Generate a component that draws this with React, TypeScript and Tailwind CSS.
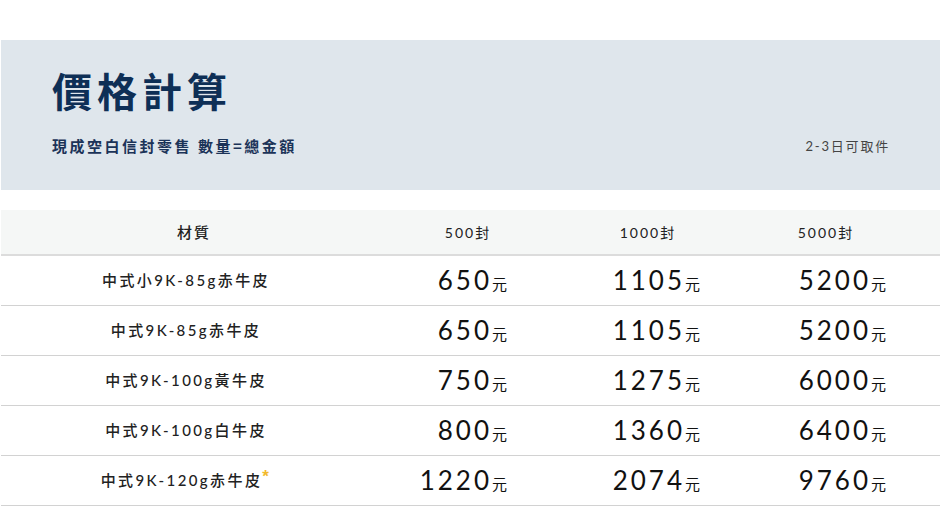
import React from "react";

const rows: { name: string; star?: boolean; v: [string, string, string] }[] = [
  { name: "中式小9K-85g赤牛皮", v: ["650", "1105", "5200"] },
  { name: "中式9K-85g赤牛皮", v: ["650", "1105", "5200"] },
  { name: "中式9K-100g黃牛皮", v: ["750", "1275", "6000"] },
  { name: "中式9K-100g白牛皮", v: ["800", "1360", "6400"] },
  { name: "中式9K-120g赤牛皮", star: true, v: ["1220", "2074", "9760"] },
];

const font = "font-['Lato','Noto_Sans_CJK_TC',sans-serif]";

function Price({ n }: { n: string }) {
  return (
    <span className="flex items-baseline">
      <span className="text-[26px] tracking-[3px] text-[#111]">{n}</span>
      <span className="text-[15px] text-[#111] font-['Noto_Sans_CJK_TC',sans-serif]">元</span>
    </span>
  );
}

export default function App() {
  return (
    <div className={`w-[941px] h-[512px] bg-white ${font}`}>
      <div className="h-[40px]" />
      <div className="mx-[1px] h-[150px] bg-[#dfe6ec] pl-[51px] pr-[50px] flex flex-col">
        <h1 className="mt-[25px] text-[40px] leading-[50px] font-bold tracking-[5px] text-[#0e2f56] font-['Noto_Sans_CJK_TC',sans-serif]">
          價格計算
        </h1>
        <div className="mt-[21px] flex items-center justify-between">
          <span className="text-[15px] leading-[20px] font-bold tracking-[2.5px] text-[#1b3358] font-['Noto_Sans_CJK_TC',sans-serif]">
            現成空白信封零售 數量=總金額
          </span>
          <span className="text-[13px] leading-[20px] tracking-[1.8px] text-[#444] font-['Noto_Sans_CJK_TC',sans-serif]">
            <span className="font-['Lato',sans-serif]">2-3</span>日可取件
          </span>
        </div>
      </div>
      <div className="h-[20px]" />
      <div className="mx-[1px]">
        <div className="grid grid-cols-[370px_194px_166px_1fr] h-[46px] bg-[#f5f7f6] border-b-2 border-[#dcdcdc] items-center text-[#222]">
          <div className="text-center text-[15px] tracking-[2px] pl-[16px] font-medium">材質</div>
          <div className="text-center text-[14px] tracking-[2px]">500封</div>
          <div className="text-center text-[14px] tracking-[2px]">1000封</div>
          <div className="text-center text-[14px] tracking-[2px] pr-[19px]">5000封</div>
        </div>
        {rows.map((r, i) => (
          <div
            key={i}
            className="grid grid-cols-[370px_194px_166px_1fr] h-[50px] border-b border-[#d2d2d2] items-center"
          >
            <div className="text-center text-[15px] tracking-[2.4px] text-[#222] font-medium">
              {r.name}
              {r.star && (
                <span className="text-[#f2b92e] text-[17px] font-bold leading-none relative -top-[4px] font-['Liberation_Sans',sans-serif]">*</span>
              )}
            </div>
            <div className="flex justify-end pr-[58px]">
              <Price n={r.v[0]} />
            </div>
            <div className="flex justify-end pr-[31px]">
              <Price n={r.v[1]} />
            </div>
            <div className="flex justify-end pr-[54px]">
              <Price n={r.v[2]} />
            </div>
          </div>
        ))}
      </div>
    </div>
  );
}
